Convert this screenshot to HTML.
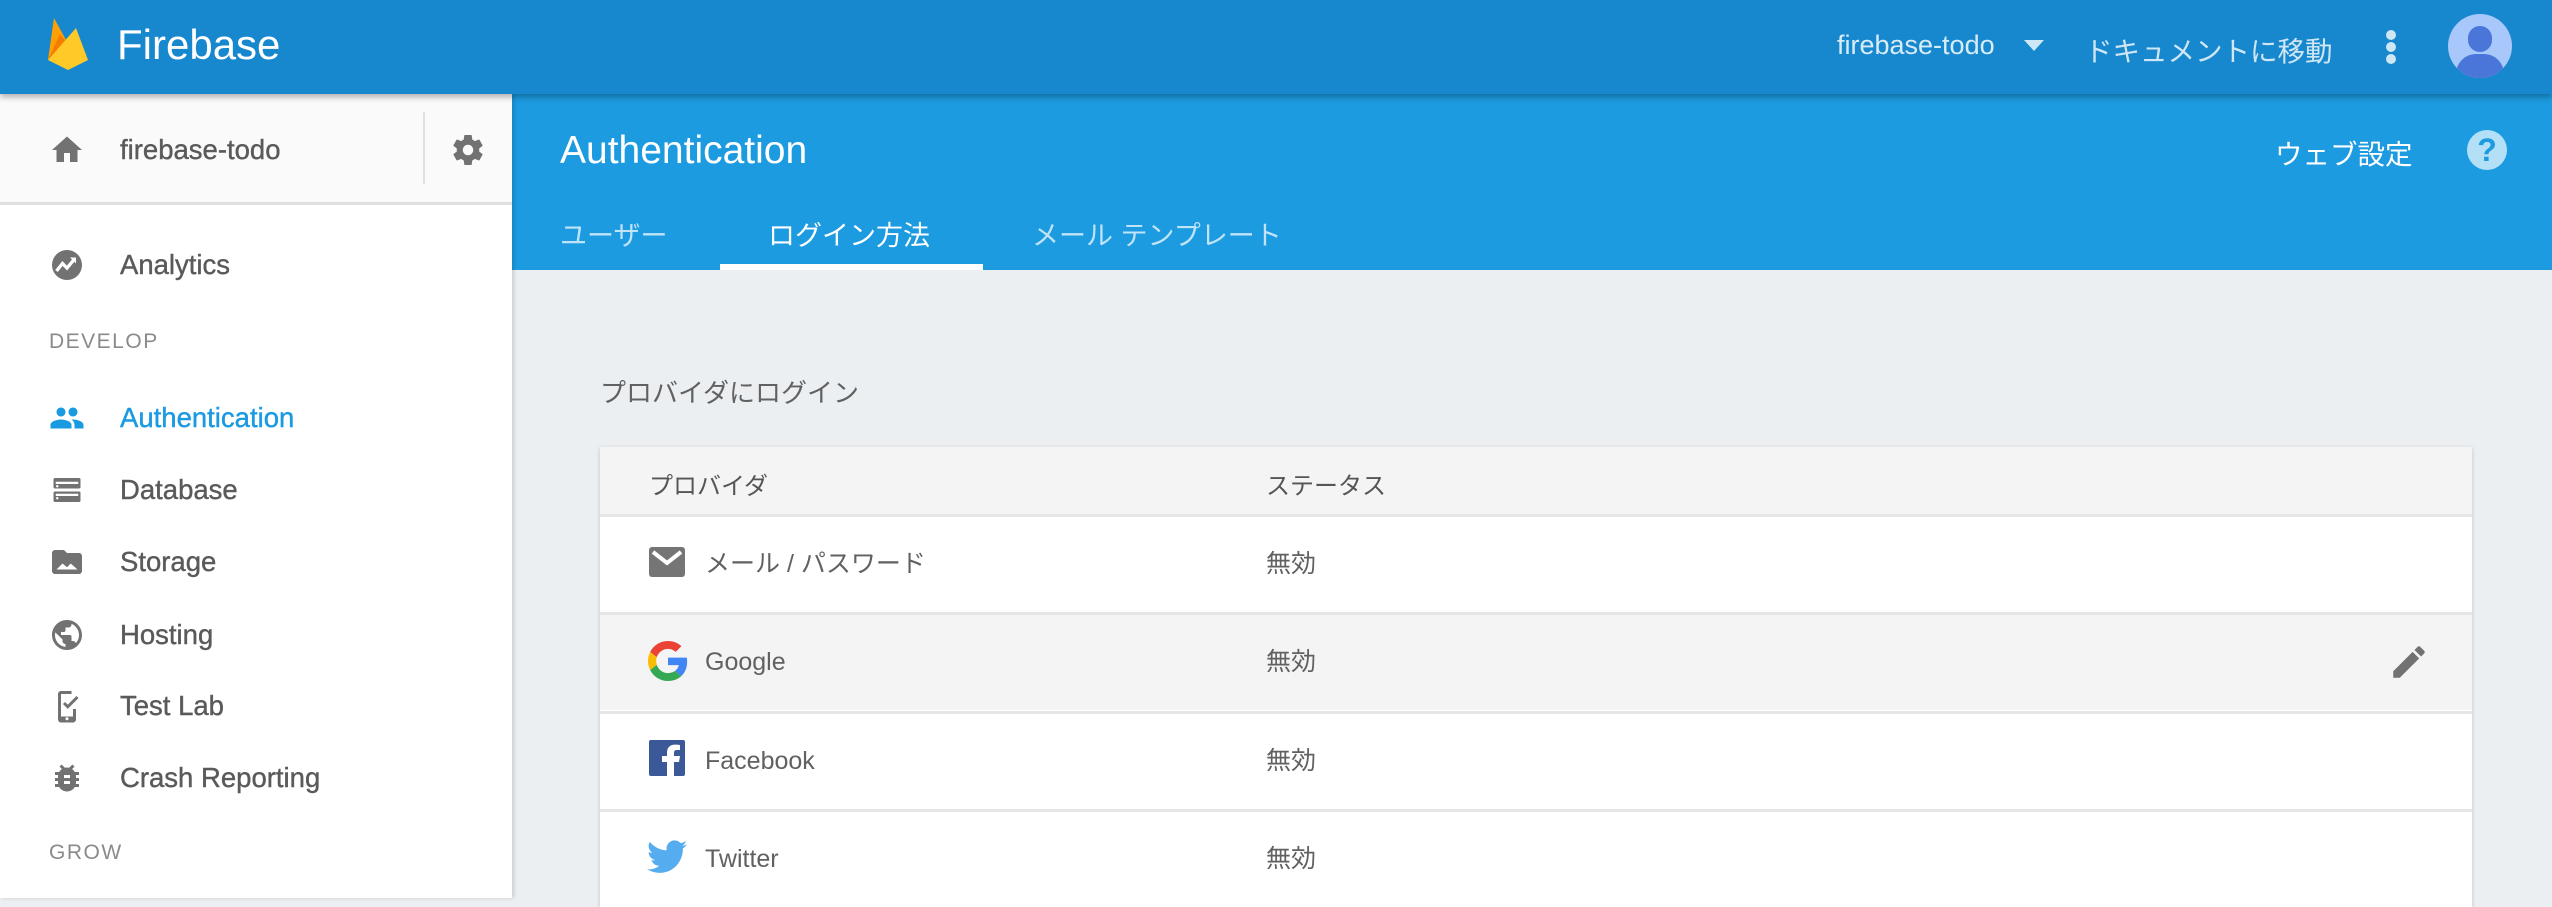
<!DOCTYPE html>
<html><head><meta charset="utf-8"><style>
*{margin:0;padding:0;box-sizing:border-box}
body{width:2552px;height:898px;overflow:hidden;background:#eceff1;font-family:"Liberation Sans","Noto Sans CJK JP",sans-serif;position:relative}
.a{position:absolute}
.top{left:0;top:0;width:2552px;height:94px;background:#1788cd;z-index:5;box-shadow:0 3px 6px rgba(0,0,0,.3)}
.side{left:0;top:94px;width:512px;height:804px;background:#fff;z-index:3;box-shadow:2px 0 4px rgba(0,0,0,.15)}
.blue{left:512px;top:94px;width:2040px;height:176px;background:#1c9be0}
.w{color:#fff;white-space:nowrap}
.t{white-space:nowrap}
.item{position:absolute;left:120px;font-size:27.5px;color:#5a5a5a;line-height:30px;-webkit-text-stroke:0.4px #5a5a5a}
.ic{position:absolute;left:49px;width:36px;height:36px;fill:#727272}
.sec{position:absolute;left:49px;font-size:21px;color:#8a8a8a;letter-spacing:1.5px}
.row{position:absolute;left:600px;width:1872px;height:98px;border-top:3px solid #e6e6e6}
.row span{position:absolute;top:0;line-height:95px;font-size:25px;color:#616161}
</style></head><body>
<div class="a top">
  <svg class="a" style="left:46px;top:16px" width="44" height="56" viewBox="0 0 44 56">
    <path d="M2 44 L8 2 L20 24 Z" fill="#ffa000"/>
    <path d="M2 44 L14 18 L22 28 Z" fill="#f57c00"/>
    <path d="M2 44 L30 12 L42 44 L22 54 Z" fill="#ffca28"/>
  </svg>
  <div class="a w" style="left:117px;top:21px;font-size:42px">Firebase</div>
  <div class="a w" style="left:1837px;top:30px;font-size:27px;color:#d7ecf8">firebase-todo</div>
  <svg class="a" style="left:2024px;top:40px" width="20" height="12"><path d="M0 0H20L10 11Z" fill="#cfe8f7"/></svg>
  <div class="a w" style="left:2085px;top:29px;font-size:27.5px;color:#cfe6f5">ドキュメントに移動</div>
  <div class="a" style="left:2386px;top:30px;width:10px;height:10px;border-radius:5px;background:#cfe6f5"></div>
  <div class="a" style="left:2386px;top:42px;width:10px;height:10px;border-radius:5px;background:#cfe6f5"></div>
  <div class="a" style="left:2386px;top:54px;width:10px;height:10px;border-radius:5px;background:#cfe6f5"></div>
  <div class="a" style="left:2448px;top:14px;width:64px;height:64px;border-radius:32px;background:#a8c7fa;overflow:hidden">
    <div class="a" style="left:20px;top:12px;width:24px;height:26px;border-radius:12px;background:#4a75d9"></div>
    <div class="a" style="left:8px;top:40px;width:48px;height:40px;border-radius:22px;background:#4a75d9"></div>
  </div>
</div>
<div class="a side">
  <div class="a" style="left:0;top:0;width:512px;height:111px;background:#fafafa;border-bottom:3px solid #e0e0e0"></div>
  <svg class="ic" style="top:38px" viewBox="0 0 24 24"><path d="M10 20v-6h4v6h5v-8h3L12 3 2 12h3v8z"/></svg>
  <div class="item" style="top:41px">firebase-todo</div>
  <div class="a" style="left:423px;top:18px;width:2px;height:72px;background:#e0e0e0"></div>
  <svg class="ic" style="left:450px;top:38px" viewBox="0 0 24 24"><path d="M19.43 12.98c.04-.32.07-.64.07-.98s-.03-.66-.07-.98l2.11-1.65c.19-.15.24-.42.12-.64l-2-3.46c-.12-.22-.39-.3-.61-.22l-2.49 1c-.52-.4-1.08-.73-1.69-.98l-.38-2.65C14.46 2.18 14.25 2 14 2h-4c-.25 0-.46.18-.49.42l-.38 2.65c-.61.25-1.17.59-1.690.98l-2.49-1c-.23-.09-.49 0-.61.22l-2 3.46c-.13.22-.07.49.12.64l2.11 1.65c-.04.32-.07.65-.07.98s.03.66.07.98l-2.11 1.65c-.19.15-.24.42-.12.64l2 3.46c.12.22.39.3.61.22l2.49-1c.52.4 1.08.73 1.69.98l.38 2.65c.03.24.24.42.49.42h4c.25 0 .46-.18.49-.42l.38-2.65c.61-.25 1.17-.59 1.69-.98l2.49 1c.23.09.49 0 .61-.22l2-3.46c.12-.22.07-.49-.12-.64l-2.11-1.65zM12 15.5c-1.93 0-3.5-1.57-3.5-3.5s1.57-3.5 3.5-3.5 3.5 1.57 3.5 3.5-1.57 3.5-3.5 3.5z"/></svg>
  <svg class="ic" style="top:153px" viewBox="0 0 24 24"><circle cx="12" cy="12" r="10"/><path d="M5 16l4-5 3 3 5-6" stroke="#fff" stroke-width="2.2" fill="none"/><path d="M14 7h4v4z" fill="#fff"/></svg>
  <div class="item" style="top:156px">Analytics</div>
  <div class="sec" style="top:236px">DEVELOP</div>
  <svg class="ic" style="top:306px;fill:#1a9ae0" viewBox="0 0 24 24"><path d="M16 11c1.66 0 2.99-1.34 2.99-3S17.66 5 16 5c-1.66 0-3 1.34-3 3s1.34 3 3 3zm-8 0c1.66 0 2.99-1.34 2.99-3S9.66 5 8 5C6.34 5 5 6.34 5 8s1.34 3 3 3zm0 2c-2.33 0-7 1.17-7 3.5V19h14v-2.5c0-2.33-4.67-3.5-7-3.5zm8 0c-.29 0-.62.02-.97.05 1.16.84 1.97 1.97 1.97 3.45V19h6v-2.5c0-2.33-4.67-3.5-7-3.5z"/></svg>
  <div class="item" style="top:309px;color:#1a9ae0;-webkit-text-stroke:0.4px #1a9ae0">Authentication</div>
  <svg class="ic" style="top:378px" viewBox="0 0 24 24"><rect x="3" y="4" width="18" height="7" rx="1"/><rect x="3" y="13" width="18" height="7" rx="1"/><rect x="4.5" y="6.5" width="15" height="1.5" fill="#fff"/><circle cx="5.5" cy="9.5" r=".8" fill="#fff"/><circle cx="5.5" cy="17.5" r=".8" fill="#fff"/><rect x="4.5" y="14.5" width="15" height="1.5" fill="#fff"/></svg>
  <div class="item" style="top:381px">Database</div>
  <svg class="ic" style="top:450px" viewBox="0 0 24 24"><path d="M2 6c0-1 .9-2 2-2h6l2 2h8c1.1 0 2 .9 2 2v10c0 1.1-.9 2-2 2H4c-1.1 0-2-.9-2-2z"/><path d="M5 17l4-4 3 2.5 2.5-2.5 4.5 4z" fill="#fff"/></svg>
  <div class="item" style="top:453px">Storage</div>
  <svg class="ic" style="top:523px" viewBox="0 0 24 24"><path d="M12 2C6.48 2 2 6.48 2 12s4.48 10 10 10 10-4.48 10-10S17.52 2 12 2zm-1 17.93c-3.95-.49-7-3.85-7-7.93 0-.62.08-1.21.21-1.79L9 15v1c0 1.1.9 2 2 2v1.93zm6.9-2.54c-.26-.81-1-1.39-1.9-1.39h-1v-3c0-.55-.45-1-1-1H8v-2h2c.55 0 1-.45 1-1V7h2c1.1 0 2-.9 2-2v-.41c2.93 1.19 5 4.06 5 7.41 0 2.08-.8 3.97-2.1 5.39z"/></svg>
  <div class="item" style="top:526px">Hosting</div>
  <svg class="ic" style="top:594px" viewBox="0 0 24 24"><path d="M8 2h7v2H8v15h8v-5h2v7c0 1.1-.9 2-2 2H8c-1.1 0-2-.9-2-2V4c0-1.1.9-2 2-2z"/><circle cx="12" cy="20.5" r="1" fill="#fff"/><path d="M10 10l2.5 2.5L19 6" stroke="#727272" stroke-width="2" fill="none"/></svg>
  <div class="item" style="top:597px">Test Lab</div>
  <svg class="ic" style="top:666px" viewBox="0 0 24 24"><path d="M20 8h-2.81c-.45-.78-1.07-1.45-1.82-1.96L17 4.41 15.59 3l-2.17 2.17C12.96 5.06 12.49 5 12 5c-.49 0-.96.06-1.41.17L8.41 3 7 4.41l1.62 1.63C7.88 6.55 7.26 7.22 6.81 8H4v2h2.09c-.05.33-.09.66-.09 1v1H4v2h2v1c0 .34.04.67.09 1H4v2h2.81c1.04 1.79 2.97 3 5.19 3s4.15-1.21 5.19-3H20v-2h-2.09c.05-.33.09-.66.09-1v-1h2v-2h-2v-1c0-.34-.04-.67-.09-1H20V8zm-6 8h-4v-2h4v2zm0-4h-4v-2h4v2z"/></svg>
  <div class="item" style="top:669px">Crash Reporting</div>
  <div class="sec" style="top:747px">GROW</div>
</div>
<div class="a blue">
  <div class="a w" style="left:48px;top:35px;font-size:39px">Authentication</div>
  <div class="a w" style="left:48px;top:120px;font-size:27px;color:#bfe3f7">ユーザー</div>
  <div class="a w" style="left:256px;top:120px;font-size:27px">ログイン方法</div>
  <div class="a w" style="left:520px;top:120px;font-size:27px;color:#bfe3f7">メール テンプレート</div>
  <div class="a" style="left:208px;top:170px;width:263px;height:6px;background:#fff"></div>
  <div class="a w" style="left:1763px;top:38px;font-size:27.5px">ウェブ設定</div>
  <div class="a" style="left:1955px;top:36px;width:40px;height:40px;border-radius:20px;background:#b3e0f7;color:#1c9be0;font-size:32px;font-weight:bold;text-align:center;line-height:40px">?</div>
</div>
<div class="a t" style="left:600px;top:373px;font-size:26px;color:#616161">プロバイダにログイン</div>
<div class="a" style="left:600px;top:447px;width:1872px;height:460px;background:#fff;box-shadow:0 1px 4px rgba(0,0,0,.18)"></div>
<div class="a" style="left:600px;top:447px;width:1872px;height:67px;background:#f4f4f4"></div>
<div class="a t" style="left:649px;top:466px;font-size:24px;color:#555">プロバイダ</div>
<div class="a t" style="left:1266px;top:466px;font-size:24px;color:#555">ステータス</div>
<div class="row" style="top:514px"><svg class="a" style="left:49px;top:30px" width="36" height="30" viewBox="0 0 36 30"><rect width="36" height="30" rx="3" fill="#757575"/><path d="M4 5l14 11 14-11" stroke="#fff" stroke-width="4" fill="none"/></svg><span style="left:105px">メール / パスワード</span><span style="left:666px">無効</span></div>
<div class="row" style="top:612px;background:#f4f4f4"><svg class="a" style="left:48px;top:26px" width="40" height="40" viewBox="0 0 48 48"><path fill="#EA4335" d="M24 9.5c3.54 0 6.71 1.22 9.21 3.6l6.85-6.85C35.9 2.38 30.47 0 24 0 14.62 0 6.51 5.38 2.56 13.22l7.98 6.19C12.43 13.72 17.74 9.5 24 9.5z"/><path fill="#4285F4" d="M46.98 24.55c0-1.57-.15-3.09-.38-4.55H24v9.02h12.94c-.58 2.96-2.26 5.48-4.78 7.18l7.73 6c4.51-4.18 7.09-10.36 7.09-17.65z"/><path fill="#FBBC05" d="M10.53 28.59c-.48-1.45-.76-2.99-.76-4.59s.27-3.14.76-4.59l-7.98-6.19C.92 16.46 0 20.12 0 24c0 3.88.92 7.54 2.56 10.78l7.97-6.19z"/><path fill="#34A853" d="M24 48c6.48 0 11.93-2.13 15.89-5.81l-7.73-6c-2.15 1.45-4.92 2.3-8.16 2.3-6.26 0-11.57-4.22-13.47-9.91l-7.98 6.19C6.51 42.62 14.62 48 24 48z"/></svg><span style="left:105px">Google</span><span style="left:666px">無効</span>
<svg class="a" style="left:1788px;top:26px" width="42" height="42" viewBox="0 0 24 24"><path fill="#727272" d="M3 17.25V21h3.75L17.81 9.94l-3.75-3.75L3 17.25zM20.71 7.04c.39-.39.39-1.02 0-1.41l-2.34-2.34c-.39-.39-1.02-.39-1.41 0l-1.83 1.83 3.75 3.75 1.83-1.83z"/></svg></div>
<div class="row" style="top:711px"><svg class="a" style="left:49px;top:26px" width="36" height="36" viewBox="0 0 36 36"><rect width="36" height="36" rx="2" fill="#3b5998"/><path d="M25 36V22h5l1-6h-6v-3c0-2 .7-3 3-3h3V5c-1-.2-3-.4-5-.4-5 0-8 3-8 8V16h-5v6h5v14z" fill="#fff"/></svg><span style="left:105px">Facebook</span><span style="left:666px">無効</span></div>
<div class="row" style="top:809px"><svg class="a" style="left:47px;top:28px" width="40" height="34" viewBox="0 0 24 20"><path fill="#55acee" d="M24 2.4c-.9.4-1.8.7-2.8.8 1-.6 1.8-1.6 2.2-2.7-1 .6-2 1-3.1 1.2C19.3.7 18 0 16.6 0c-2.7 0-4.9 2.2-4.9 4.9 0 .4 0 .8.1 1.1C7.7 5.8 4.1 3.9 1.7.9c-.4.7-.7 1.6-.7 2.5 0 1.7.9 3.2 2.2 4.1-.8 0-1.6-.2-2.2-.6v.1c0 2.4 1.7 4.4 3.9 4.8-.4.1-.8.2-1.3.2-.3 0-.6 0-.9-.1.6 2 2.4 3.4 4.6 3.4-1.7 1.3-3.8 2.1-6.1 2.1-.4 0-.8 0-1.2-.1 2.2 1.4 4.8 2.2 7.5 2.2 9.1 0 14-7.5 14-14v-.6c1-.7 1.8-1.6 2.5-2.5z"/></svg><span style="left:105px">Twitter</span><span style="left:666px">無効</span></div>
</body></html>
